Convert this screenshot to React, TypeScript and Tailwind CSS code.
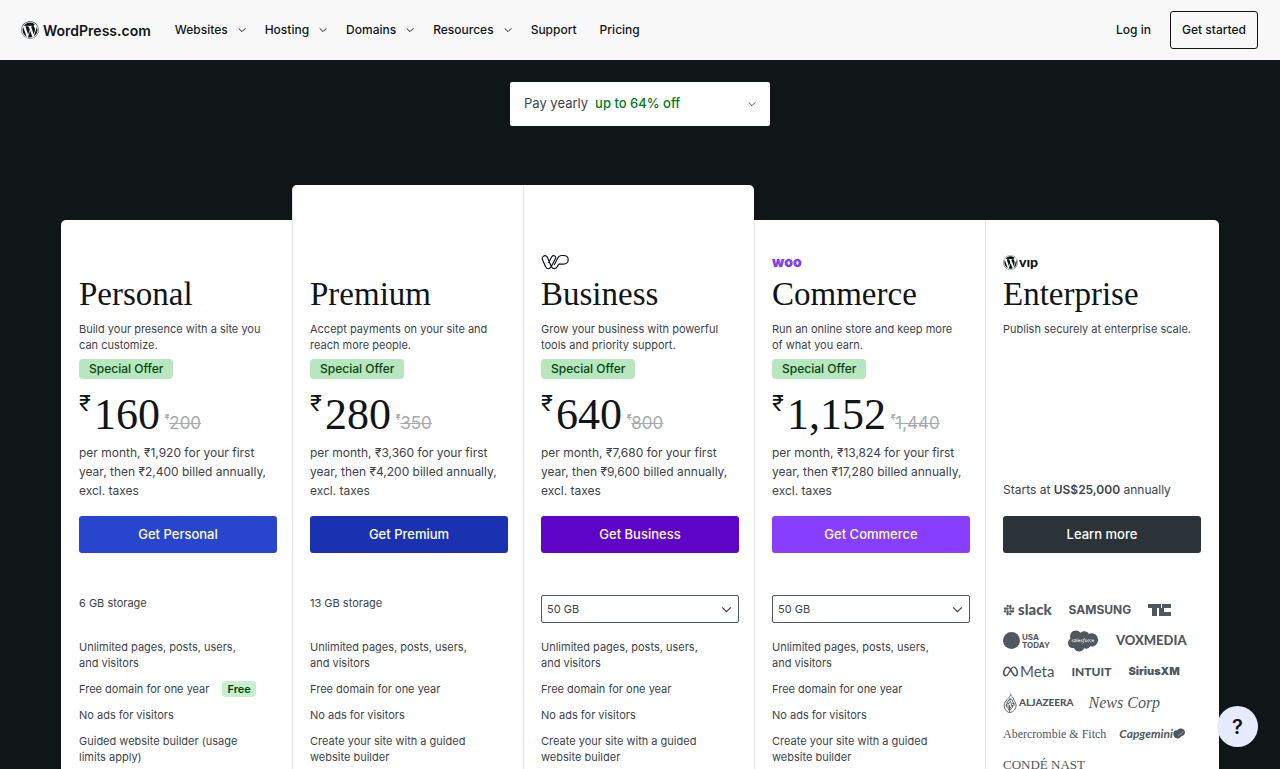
import type { ReactNode } from 'react';
import { FaSalesforce, FaSlack, FaWordpress } from 'react-icons/fa';
import { FaMeta } from 'react-icons/fa6';

const SERIF = "font-['Liberation_Serif',serif]";

function Chevron({ className }: { className: string }) {
  return (
    <svg viewBox="0 0 12 8" className={className} fill="none" stroke="currentColor" strokeWidth="1.4" aria-hidden="true">
      <path d="M1 1.5 6 6.5 11 1.5" />
    </svg>
  );
}

const NAV = [
  { label: 'Websites', menu: true },
  { label: 'Hosting', menu: true },
  { label: 'Domains', menu: true },
  { label: 'Resources', menu: true },
  { label: 'Support', menu: false },
  { label: 'Pricing', menu: false },
];

function Header() {
  return (
    <header className="flex h-15 shrink-0 items-center bg-[#f8f8f8] pr-[22px] pl-[21px] text-[12px] font-medium text-[#101517]">
      <a href="#home" className="flex items-center gap-1 text-[14px] font-semibold">
        <FaWordpress className="size-[18px]" />
        WordPress.com
      </a>
      <nav className="ml-6 flex items-center gap-[19px]">
        {NAV.map((item) =>
          item.menu ? (
            <button key={item.label} type="button" className="flex items-center gap-[10px]">
              {item.label}
              <Chevron className="h-[6px] w-2" />
            </button>
          ) : (
            <a key={item.label} href={`#${item.label.toLowerCase()}`} className="pr-1">
              {item.label}
            </a>
          ),
        )}
      </nav>
      <a href="#login" className="ml-auto">
        Log in
      </a>
      <a href="#start" className="ml-[19px] flex h-[38px] items-center rounded-[3px] border border-[#101517] px-[11px]">
        Get started
      </a>
    </header>
  );
}

function WpCloudLogo() {
  return (
    <svg viewBox="0 0 28 16" className="h-4 w-7" fill="none" stroke="#101517" strokeWidth="1.2" strokeLinecap="round" strokeLinejoin="round" aria-label="WP Cloud">
      <path d="M7.600 8.500 10.800 2.800C12.200.6 15.200 1.800 14.600 4.300L10.300 12.500C9 15.400 5.500 15.200 4.500 12.600L1.600 6C.2 3 3.400.6 5.600 2.300 6.700 3.200 7 5 7.600 6.200L10 11.800" />
      <path d="M10.300 12.500C11.500 15.400 15.200 15 16.400 12.600L17.600 10.200H22.500C25.300 10.200 27.200 8.200 27.200 5.800S25.300 1.500 22.500 1.500H20.800C18.800 1.500 17.600 2.300 16.800 4L13.400 10.500" />
    </svg>
  );
}

type Plan = {
  name: string;
  blurb: string;
  logo?: ReactNode;
  price: string;
  was: string;
  terms: string;
  button: string;
  storage: string;
  pickStorage?: boolean;
  raised?: string;
  builder: string;
  freeTag?: boolean;
};

const PLANS: Plan[] = [
  {
    name: 'Personal',
    blurb: 'Build your presence with a site you can customize.',
    price: '160',
    was: '200',
    terms: 'per month, ₹1,920 for your first year, then ₹2,400 billed annually, excl. taxes',
    button: 'bg-[#2845ce]',
    storage: '6 GB',
    builder: 'Guided website builder (usage limits apply)',
    freeTag: true,
  },
  {
    name: 'Premium',
    blurb: 'Accept payments on your site and reach more people.',
    price: '280',
    was: '350',
    terms: 'per month, ₹3,360 for your first year, then ₹4,200 billed annually, excl. taxes',
    button: 'bg-[#1a32b2]',
    storage: '13 GB',
    raised: 'rounded-tl-[5px]',
    builder: 'Create your site with a guided website builder',
  },
  {
    name: 'Business',
    blurb: 'Grow your business with powerful tools and priority support.',
    logo: <WpCloudLogo />,
    price: '640',
    was: '800',
    terms: 'per month, ₹7,680 for your first year, then ₹9,600 billed annually, excl. taxes',
    button: 'bg-[#5f05c9]',
    storage: '50 GB',
    pickStorage: true,
    raised: 'rounded-tr-[5px]',
    builder: 'Create your site with a guided website builder',
  },
  {
    name: 'Commerce',
    blurb: 'Run an online store and keep more of what you earn.',
    logo: <span className="text-[14px] leading-4 font-black text-[#7f3bff]">woo</span>,
    price: '1,152',
    was: '1,440',
    terms: 'per month, ₹13,824 for your first year, then ₹17,280 billed annually, excl. taxes',
    button: 'bg-[#873eff]',
    storage: '50 GB',
    pickStorage: true,
    builder: 'Create your site with a guided website builder',
  },
];

function PlanHeading({ name, blurb, logo }: { name: string; blurb: string; logo?: ReactNode }) {
  return (
    <>
      <div className="flex h-4 items-center">{logo}</div>
      <h2 className={`mt-1 text-[33px] leading-10 text-[#101517] ${SERIF}`}>{name}</h2>
      <p className="mt-[7px] h-8 pr-2 text-[11px] leading-4">{blurb}</p>
    </>
  );
}

function PlanCard({ plan, first }: { plan: Plan; first: boolean }) {
  const edge = first ? 'rounded-tl-[5px] pl-[18px]' : 'border-l border-[#e4e5e6] pl-[17px]';
  const top = plan.raised ? `pt-[69px] ${plan.raised}` : 'mt-[35px] pt-[34px]';
  return (
    <section className={`bg-white pr-[15px] pb-10 ${edge} ${top}`}>
      <PlanHeading name={plan.name} blurb={plan.blurb} logo={plan.logo} />
      <div className="mt-[6px] flex">
        <span className="h-5 rounded-[4px] bg-[#b8e6bf] px-[10px] text-[12px] leading-[19px] font-medium text-[#00450c]">
          Special Offer
        </span>
      </div>
      <div className="mt-2 flex h-14 items-start text-[#101517]">
        <span className="pt-1 pr-[3px] text-[22px] leading-6">₹</span>
        <span className={`text-[44px] leading-[56px] ${SERIF}`}>{plan.price}</span>
        <s className="flex items-start pt-[25px] pl-[5px] text-[#a7aaad] decoration-1">
          <span className="text-[8px] leading-[10px]">₹</span>
          <span className="text-[17px] leading-[22px]">{plan.was}</span>
        </s>
      </div>
      <p className="h-[57px] text-[12px] leading-[19px]">{plan.terms}</p>
      <button type="button" className={`mt-4 h-[37px] w-full rounded-[3px] text-[13px] font-medium text-white ${plan.button}`}>
        Get {plan.name}
      </button>
      <div className="mt-[42px] h-7 text-[11px] leading-4">
        {plan.pickStorage ? (
          <div className="relative">
            <select
              aria-label={`${plan.name} storage`}
              className="h-7 w-full appearance-none rounded-[2px] border border-[#50575e] bg-white px-[5px] text-[11px] text-[#3c434a]"
            >
              <option>{plan.storage}</option>
            </select>
            <Chevron className="pointer-events-none absolute top-[11px] right-[7px] h-[7px] w-[11px]" />
          </div>
        ) : (
          `${plan.storage} storage`
        )}
      </div>
      <ul className="mt-4 flex flex-col gap-[10px] text-[11px] leading-4">
        <li className="pr-7">Unlimited pages, posts, users, and visitors</li>
        <li className="flex items-center">
          Free domain for one year
          {plan.freeTag && (
            <span className="ml-[13px] h-4 rounded-[4px] bg-[#c9efd0] px-[5px] text-[11px] font-semibold text-[#00450c]">
              Free
            </span>
          )}
        </li>
        <li>No ads for visitors</li>
        <li className="pr-7">{plan.builder}</li>
      </ul>
    </section>
  );
}

function TechCrunchLogo() {
  return (
    <svg viewBox="0 0 24 12" className="h-3 w-6" fill="currentColor" aria-label="TechCrunch">
      <rect x="0" y="0" width="13" height="4" />
      <rect x="4" y="4" width="5" height="8" />
      <rect x="14" y="0" width="9" height="4" />
      <rect x="11" y="4" width="5" height="8" />
      <rect x="16" y="8" width="7" height="4" />
    </svg>
  );
}

function FlameLogo() {
  return (
    <svg viewBox="0 0 14 20" className="h-5 w-[14px]" fill="none" stroke="currentColor" strokeWidth="0.9" aria-hidden="true">
      <path d="M7.500.5C9 3 6 4 4 6.500 1.500 9.500.5 12 1.500 15 2.500 18 5 19.500 7 19.500 10.500 19 13.500 16 13 11.500 12.500 8.500 10.500 8 10.500 5.500 10.500 4.500 8.500 3.500 8 2.500" />
      <path d="M7.500 5C5 8 3 10 3.500 13M8.500 6C9.500 9 11.500 10 11 13M7 8C9 11 9 13 7 15M5.500 10C4 14 6 16 8 17M9.500 12C10 15 8 17 5 16.500M2.500 12.500 5 15.500M6.500 12V19M5 8 8 6M4 11 7 9.500M9 10 12 11" />
    </svg>
  );
}

function CapgeminiMark() {
  return (
    <svg viewBox="0 0 12 11" className="h-[11px] w-3" fill="currentColor" aria-hidden="true">
      <path d="M7 .5C9.500 0 12 1.500 12 4.200 12 6.500 10.500 8 8.500 8 7.500 9.500 6.500 10.500 4.500 10.500 2 10 .3 8.500.3 5.800.2 3 2.500 2 4.200 2.300 4.800 1.400 5.800.7 7 .5Z" />
      <path d="M5 7.500C7 7 8.500 5.500 10 3.500" fill="none" stroke="#fff" strokeWidth=".4" />
    </svg>
  );
}

function LogoRow({ gap, children }: { gap: string; children: ReactNode }) {
  return <li className={`flex h-[31px] items-center whitespace-nowrap ${gap}`}>{children}</li>;
}

function EnterpriseCard() {
  return (
    <section className="mt-[35px] rounded-tr-[5px] border-l border-[#e4e5e6] bg-white pt-[34px] pr-[18px] pb-10 pl-[17px]">
      <PlanHeading
        name="Enterprise"
        blurb="Publish securely at enterprise scale."
        logo={
          <span className="flex items-center gap-px font-['Lato',sans-serif] text-[14px] leading-4 font-black text-[#101517]">
            <FaWordpress className="size-[15px]" />
            vıp
          </span>
        }
      />
      <p className="mt-[127px] text-[12px] leading-[19px]">
        Starts at <strong className="font-semibold">US$25,000</strong> annually
      </p>
      <button type="button" className="mt-[17px] h-[37px] w-full rounded-[3px] bg-[#2c3338] text-[13px] font-medium text-white">
        Learn more
      </button>
      <ul className="mt-[41px] text-[#50575e]">
        <LogoRow gap="gap-[17px]">
          <span className="flex items-center gap-[3px] font-['Lato',sans-serif] text-[15px] font-black">
            <FaSlack className="size-3" />
            slack
          </span>
          <span className="text-[12px] font-bold">SAMSUNG</span>
          <TechCrunchLogo />
        </LogoRow>
        <LogoRow gap="gap-[18px]">
          <span className="flex items-center gap-[2px] text-[8px] leading-[8px] font-bold">
            <span className="size-[17px] rounded-full bg-[#50575e]" />
            <span className="flex flex-col">
              <span>USA</span>
              <span>TODAY</span>
            </span>
          </span>
          <FaSalesforce className="h-6 w-[30px]" />
          <span className="font-['Lato',sans-serif] text-[13px] font-black">VOXMEDIA</span>
        </LogoRow>
        <LogoRow gap="gap-[17px]">
          <span className="flex items-center gap-[2px] font-['Lato',sans-serif] text-[15px]">
            <FaMeta className="size-[15px]" />
            Meta
          </span>
          <span className="font-['Lato',sans-serif] text-[12px] font-black">INTUIT</span>
          <span className="text-[11px] font-black">SiriusXM</span>
        </LogoRow>
        <LogoRow gap="gap-[15px]">
          <span className="flex items-center gap-[2px] font-['Lato',sans-serif] text-[10px] font-black">
            <FlameLogo />
            ALJAZEERA
          </span>
          <span className={`text-[16px] italic ${SERIF}`}>News Corp</span>
        </LogoRow>
        <LogoRow gap="gap-[13px]">
          <span className={`text-[12px] ${SERIF}`}>Abercrombie &amp; Fitch</span>
          <span className="flex items-center font-['Lato',sans-serif] text-[12px] font-bold italic">
            Capgemini
            <CapgeminiMark />
          </span>
        </LogoRow>
        <LogoRow gap="gap-4">
          <span className={`text-[13px] ${SERIF}`}>CONDÉ NAST</span>
        </LogoRow>
      </ul>
    </section>
  );
}

export default function App() {
  return (
    <div className="flex h-screen flex-col bg-[#101517] font-['Inter',sans-serif] text-[#3c434a]">
      <Header />
      <main className="min-h-0 flex-1 overflow-y-auto px-[61px] pt-[22px] [scrollbar-width:none]">
        <button
          type="button"
          aria-haspopup="listbox"
          className="mx-auto flex h-11 w-[260px] items-center rounded-[2px] bg-white px-[14px] text-[13px]"
        >
          Pay yearly
          <span className="ml-[7px] font-medium text-[#007a1c]">up to 64% off</span>
          <Chevron className="ml-auto h-[6px] w-2" />
        </button>
        <div className="mt-[59px] grid grid-cols-[231fr_231fr_231fr_231fr_234fr]">
          {PLANS.map((plan, i) => (
            <PlanCard key={plan.name} plan={plan} first={i === 0} />
          ))}
          <EnterpriseCard />
        </div>
      </main>
      <button
        type="button"
        aria-label="Help"
        className="fixed right-[22px] bottom-[22px] size-[41px] rounded-full bg-[#e8eaff] text-[20px] font-semibold text-[#101517]"
      >
        ?
      </button>
    </div>
  );
}
